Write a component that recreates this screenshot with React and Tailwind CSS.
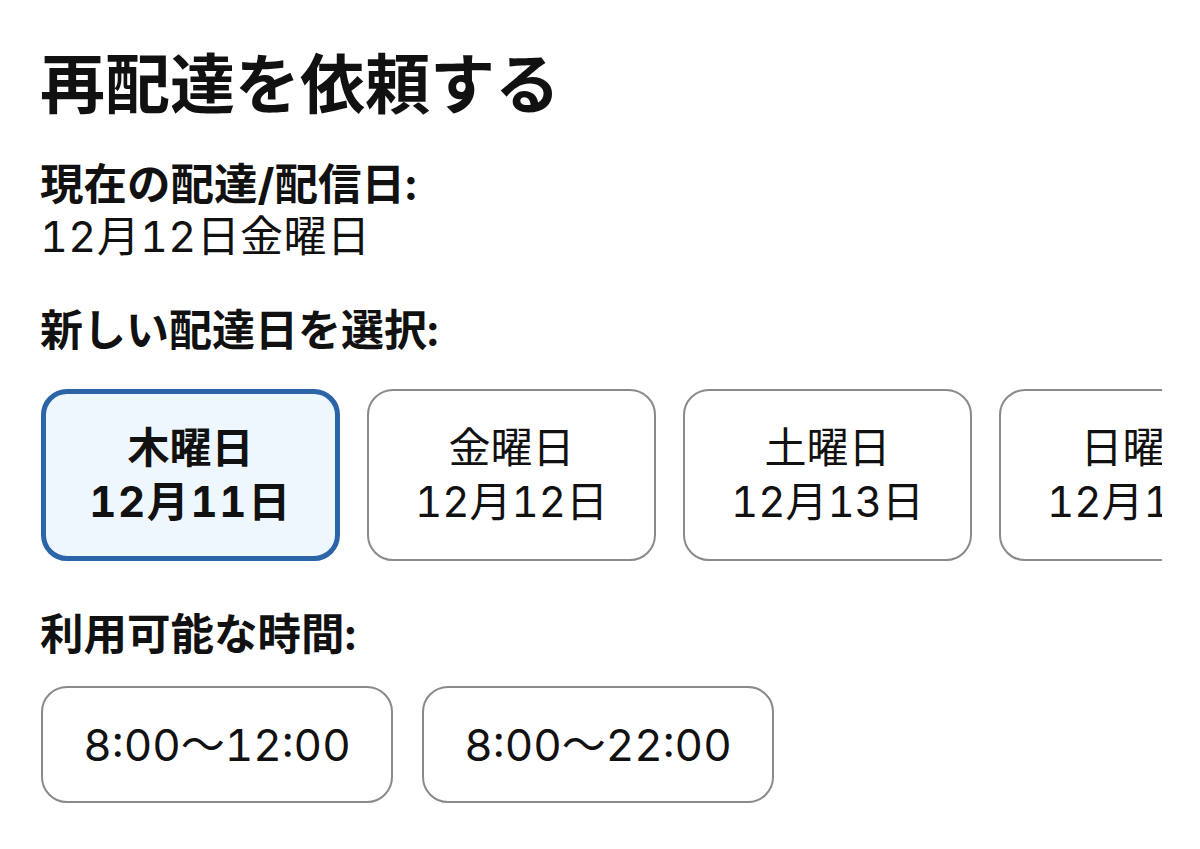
import React from "react";

const font = { fontFamily: 'Inter, "Noto Sans CJK JP", sans-serif' };

const dates = [
  { day: "木曜日", date: "12月11日", selected: true },
  { day: "金曜日", date: "12月12日" },
  { day: "土曜日", date: "12月13日" },
  { day: "日曜日", date: "12月14日" },
];

const times = ["8:00〜12:00", "8:00〜22:00"];

export default function App() {
  return (
    <div
      className="w-[1200px] h-[849px] overflow-hidden bg-white text-[#111111] pl-[40px] pt-[47px] tabular-nums"
      style={font}
    >
      <h1 className="text-[65px] leading-[76px] font-bold">再配達を依頼する</h1>

      <div className="mt-[35px] text-[43.5px] leading-[52px] font-bold">現在の配達/配信日:</div>
      <div className="text-[43px] leading-[52px] font-normal tracking-[0.01em]">12月12日金曜日</div>

      <div className="mt-[42px] text-[43px] leading-[52px] font-bold">新しい配達日を選択:</div>

      <div className="mt-[33px] ml-[1px] w-[1121px] overflow-hidden">
        <div className="flex gap-[27px]">
          {dates.map((d) =>
            d.selected ? (
              <div
                key={d.date}
                className="shrink-0 w-[299px] h-[172px] rounded-[26px] border-[5px] border-[#2b64a7] bg-[#eef7fd] flex flex-col items-center justify-center text-[42px] leading-[54px] font-bold"
              >
                <div>{d.day}</div>
                <div className="tracking-[0.04em]">{d.date}</div>
              </div>
            ) : (
              <div
                key={d.date}
                className="shrink-0 w-[289px] h-[172px] rounded-[26px] border-[2.5px] border-[#8a8a8a] bg-white flex flex-col items-center justify-center text-[42px] leading-[54px] font-normal"
              >
                <div>{d.day}</div>
                <div>{d.date}</div>
              </div>
            )
          )}
        </div>
      </div>

      <div className="mt-[47px] text-[43.5px] leading-[52px] font-bold">利用可能な時間:</div>

      <div className="mt-[26px] ml-[1px] flex gap-[29px]">
        {times.map((t) => (
          <div
            key={t}
            className="shrink-0 w-[352px] h-[117px] rounded-[26px] border-[2.5px] border-[#8a8a8a] bg-white flex items-center justify-center text-[44px] leading-[54px] font-normal"
          >
            {t}
          </div>
        ))}
      </div>
    </div>
  );
}
